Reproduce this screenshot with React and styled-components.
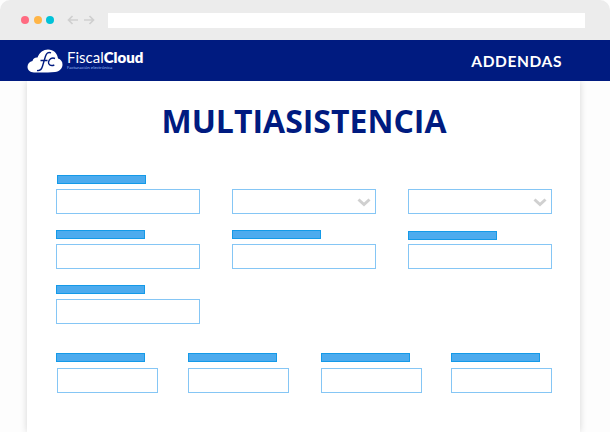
import React from 'react'
import styled, { createGlobalStyle } from 'styled-components'

const App = () => {
    return (
        <Page>
            <GlobalStyle />
            <Chrome>
                <Dots>
                    <Dot color="#ff6b81" />
                    <Dot color="#ffb547" />
                    <Dot color="#00c2d8" />
                </Dots>
                <Arrows>
                    <Arrow />
                    <Arrow flip />
                </Arrows>
                <AddressBar />
            </Chrome>
            <Header>
                <Logo>
                    <CloudIcon />
                    <LogoText>
                        <LogoName>Fiscal<b>Cloud</b></LogoName>
                        <LogoTag>Facturación electrónica</LogoTag>
                    </LogoText>
                </Logo>
                <HeaderTitle>ADDENDAS</HeaderTitle>
            </Header>
            <Card>
                <Title>MULTIASISTENCIA</Title>
                <Grid>
                    <Field><Label nudge /><Input /></Field>
                    <Field><LabelGap /><Input><Chevron /></Input></Field>
                    <Field><LabelGap /><Input><Chevron /></Input></Field>
                    <Field><Label /><Input /></Field>
                    <Field><Label /><Input /></Field>
                    <Field><Label low /><Input /></Field>
                    <Field><Label /><Input /></Field>
                </Grid>
                <BottomRow>
                    <Field><Label /><SmallInput nudge /></Field>
                    <Field><Label /><SmallInput /></Field>
                    <Field><Label /><SmallInput /></Field>
                    <Field><Label /><SmallInput /></Field>
                </BottomRow>
            </Card>
        </Page>
    )
}

export default App

const Arrow = ({ flip }) => (
    <svg width="12" height="10" viewBox="0 0 12 10" fill="none" stroke="#cfcfcf" strokeWidth="1.7"
        style={flip ? { transform: 'scaleX(-1)' } : undefined}>
        <path d="M11 5H1.500M5.500 1L1.500 5l4 4" />
    </svg>
)

const CloudIcon = () => (
    <svg width="36" height="24" viewBox="0 0 36 24">
        <path fill="#fff" d="M7 23.500C3 23.500 .5 21 .5 17.800c0-3 2-5.200 5-5.800C6 9.500 8 8.200 10.500 8.500 12.500 3.500 16.500 .6 21 .6c5.500 0 9.500 3.900 10 9 2.800.8 4.500 3 4.500 5.800 0 4-3 7-7.500 7.500-7 .8-14 .6-21 .6z" />
        <path fill="none" stroke="#001b80" strokeWidth="1.400" d="M24 3.800c-3-1.200-4.600.6-5.600 3.700l-3 10c-.9 3-2.500 4.500-5.400 4M13.500 11.500h7" />
        <path fill="none" stroke="#001b80" strokeWidth="1.400" d="M28 9.500c-3.200-1.300-6 .6-6.500 3.700-.4 2.800 2.600 4.200 5.800 2.800" />
    </svg>
)

const Chevron = () => (
    <ChevronSvg width="14" height="9" viewBox="0 0 14 9" fill="none" stroke="#d0d0d0" strokeWidth="3">
        <path d="M1.500 1.500L7 6.500l5.500-5" />
    </ChevronSvg>
)

const GlobalStyle = createGlobalStyle`
    body{
        margin: 0;
        background: #fff;
        font-family: "Open Sans", sans-serif;
    }
`
const Page = styled.div`
    width: 610px;
    height: 432px;
    overflow: hidden;
    background: #fdfdfd;
`
const Chrome = styled.div`
    height: 40px;
    background: #ececec;
    border-radius: 10px 10px 0 0;
    display: flex;
    align-items: center;
    padding: 0 25px 0 21px;
    box-sizing: border-box;
`
const Dots = styled.div`
    display: flex;
    gap: 4.500px;
`
const Dot = styled.div`
    width: 8px;
    height: 8px;
    border-radius: 50%;
    background: ${p => p.color};
`
const Arrows = styled.div`
    display: flex;
    gap: 4px;
    margin-left: 13px;
`
const AddressBar = styled.div`
    height: 15px;
    margin-left: 13px;
    flex: 1;
    background: #fff;
`
const Header = styled.div`
    position: relative;
    z-index: 1;
    height: 41px;
    background: #001b80;
    display: flex;
    align-items: center;
    justify-content: space-between;
    padding: 0 48px 0 27px;
`
const Logo = styled.div`
    display: flex;
    align-items: center;
    gap: 4px;
`
const LogoText = styled.div`
    color: #fff;
    margin-top: -1px;
`
const LogoName = styled.div`
    font-family: "Lato", sans-serif;
    font-size: 15px;
    line-height: 15px;
    font-weight: 400;
    b{
        font-weight: 800;
    }
`
const LogoTag = styled.div`
    font-size: 4.200px;
    line-height: 5px;
    color: #a9ccff;
`
const HeaderTitle = styled.div`
    font-family: "Lato", sans-serif;
    font-size: 15.500px;
    font-weight: 700;
    letter-spacing: .6px;
    color: #fff;
`
const Card = styled.div`
    width: 553px;
    height: 351px;
    margin-left: 27px;
    padding: 0 28px 0 29px;
    box-sizing: border-box;
    background: #fff;
    box-shadow: 0 0 7px rgba(0, 0, 0, .16);
    overflow: hidden;
`
const Title = styled.h1`
    margin: 18px 0 0;
    font-size: 32px;
    line-height: 44px;
    font-weight: 700;
    color: #001b80;
    text-align: center;
`
const Grid = styled.div`
    display: grid;
    grid-template-columns: repeat(3, 144px);
    column-gap: 32px;
    row-gap: 16px;
    margin-top: 32px;
`
const BottomRow = styled.div`
    display: grid;
    grid-template-columns: 132px 133px 130px 101px;
    margin-top: 29px;
`
const Field = styled.div`
    display: flex;
    flex-direction: column;
`
const Label = styled.div`
    width: 89px;
    height: 9px;
    box-sizing: border-box;
    background: #4dabee;
    border: 1px solid #149ae8;
    margin-left: ${p => (p.nudge ? '1px' : '0')};
    margin-top: ${p => (p.low ? '1px' : '0')};
    margin-bottom: ${p => (p.low ? '4px' : '5px')};
`
const LabelGap = styled.div`
    height: 14px;
`
const Input = styled.div`
    position: relative;
    height: 25px;
    box-sizing: border-box;
    background: #fff;
    border: 1px solid #85c6f5;
`
const SmallInput = styled(Input)`
    width: 101px;
    margin-left: ${p => (p.nudge ? '1px' : '0')};
    margin-top: 1px;
`
const ChevronSvg = styled.svg`
    position: absolute;
    right: 4px;
    top: 8px;
`
